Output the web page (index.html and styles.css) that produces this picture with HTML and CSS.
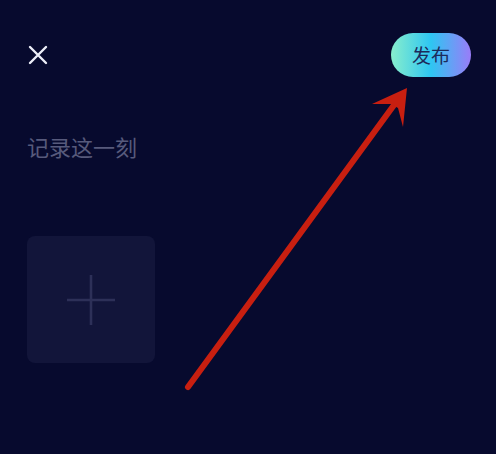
FILE: index.html
```html
<!DOCTYPE html>
<html lang="zh">
<head>
<meta charset="utf-8">
<link rel="stylesheet" href="styles.css">
</head>
<body>
<div class="page">
  <header class="top">
    <svg class="close" viewBox="0 0 20 20" width="20" height="20"><path d="M2 2L18 18M18 2L2 18" stroke="#eceef8" stroke-width="2.4" stroke-linecap="round"/></svg>
    <button class="publish">发布</button>
  </header>
  <div class="caption">记录这一刻</div>
  <div class="add">
    <svg viewBox="0 0 50 52" width="50" height="52"><path d="M25 1V51M1 26H49" stroke="#2d3058" stroke-width="2.6"/></svg>
  </div>
  <svg class="arrow" viewBox="0 0 496 454" width="496" height="454">
    <path d="M188 387L394 105" stroke="#c81f10" stroke-width="6" stroke-linecap="round" fill="none"/>
    <path d="M407 88L372 104L391 104L398 108L403 127Z" fill="#c81f10"/>
  </svg>
</div>
</body>
</html>
```
FILE: styles.css
```css
html, body {
  margin: 0;
  padding: 0;
  background: #070a2e;
}
.page {
  position: relative;
  width: 496px;
  height: 454px;
  overflow: hidden;
  font-family: "Noto Sans CJK SC", "Noto Sans", sans-serif;
}
.top {
  display: flex;
  justify-content: space-between;
  align-items: center;
  padding: 33px 25px 0 28px;
  height: 44px;
}
.close {
  display: block;
}
.publish {
  width: 80px;
  height: 44px;
  border: none;
  border-radius: 22px;
  background: linear-gradient(90deg, #88eecc 0%, #2ec6f2 50%, #9a7cf8 100%);
  color: #1c2a5a;
  font-family: "Noto Sans CJK SC", sans-serif;
  font-size: 19px;
  padding: 0;
  line-height: 44px;
}
.caption {
  margin: 54px 0 0 27px;
  font-size: 22px;
  line-height: 30px;
  color: #575a7c;
}
.add {
  margin: 75px 0 0 27px;
  width: 128px;
  height: 127px;
  border-radius: 8px;
  background: #12153a;
  display: flex;
  align-items: center;
  justify-content: center;
}
.add svg {
  display: block;
}
.arrow {
  position: absolute;
  left: 0;
  top: 0;
}
```
